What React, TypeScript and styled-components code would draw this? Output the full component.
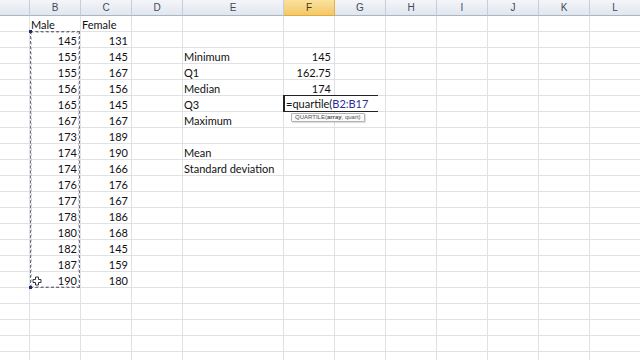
import React from "react";
import styled, { createGlobalStyle } from "styled-components";

const GlobalStyle = createGlobalStyle`
  html, body {
    margin: 0;
    padding: 0;
    background: #ffffff;
    overflow: hidden;
  }
  body {
    font-family: "Lato", "Liberation Sans", Arial, sans-serif;
  }
`;

const COLS = [
  { name: "A", width: 30 },
  { name: "B", width: 51 },
  { name: "C", width: 51 },
  { name: "D", width: 51 },
  { name: "E", width: 101 },
  { name: "F", width: 51 },
  { name: "G", width: 51 },
  { name: "H", width: 51 },
  { name: "I", width: 51 },
  { name: "J", width: 51 },
  { name: "K", width: 51 },
  { name: "L", width: 51 },
];

const ROW_COUNT = 22;

const male = [145, 155, 155, 156, 165, 167, 173, 174, 174, 176, 177, 178, 180, 182, 187, 190];
const female = [131, 145, 167, 156, 145, 167, 189, 190, 166, 176, 167, 186, 168, 145, 159, 180];

type CellValue = { text: string; align?: "left" | "right" };

const cells: Record<string, CellValue> = {
  B1: { text: "Male" },
  C1: { text: "Female" },
  E3: { text: "Minimum" },
  F3: { text: "145", align: "right" },
  E4: { text: "Q1" },
  F4: { text: "162.75", align: "right" },
  E5: { text: "Median" },
  F5: { text: "174", align: "right" },
  E6: { text: "Q3" },
  E7: { text: "Maximum" },
  E9: { text: "Mean" },
  E10: { text: "Standard deviation" },
};
male.forEach((v, i) => (cells["B" + (i + 2)] = { text: String(v), align: "right" }));
female.forEach((v, i) => (cells["C" + (i + 2)] = { text: String(v), align: "right" }));

const Sheet = styled.div`
  position: relative;
  width: 640px;
  height: 360px;
  overflow: hidden;
  background: #fff;
`;

const Grid = styled.div`
  display: grid;
  grid-template-columns: ${COLS.map((c) => c.width + "px").join(" ")};
  grid-template-rows: 16px repeat(${ROW_COUNT}, 16px);
`;

const HeaderCell = styled.div<{ $active?: boolean }>`
  box-sizing: border-box;
  display: flex;
  align-items: center;
  justify-content: center;
  font-family: "Liberation Sans", Arial, sans-serif;
  font-size: 10px;
  color: ${(p) => (p.$active ? "#4a3a10" : "#3e4a5c")};
  background: ${(p) =>
    p.$active
      ? "linear-gradient(#fbe29e, #f2c867)"
      : "linear-gradient(#f3f5f8, #e1e6ee)"};
  border-right: 1px solid ${(p) => (p.$active ? "#e2b04a" : "#c5cdd8")};
  border-bottom: 1px solid ${(p) => (p.$active ? "#e2a93a" : "#a9b6c6")};
`;

const Cell = styled.div<{ $align?: "left" | "right" }>`
  box-sizing: border-box;
  position: relative;
  border-right: 1px solid #dfe1e3;
  border-bottom: 1px solid #dfe1e3;
  font-size: 11px;
  color: #111;
  line-height: 17px;
  padding: 0 3px 0 1px;
  white-space: nowrap;
  overflow: visible;
  text-align: ${(p) => (p.$align === "right" ? "right" : "left")};
`;

/* dashed copy marquee around B2:B17 */
const Marquee = styled.div`
  position: absolute;
  left: 30px;
  top: 31px;
  width: 50px;
  height: 257px;
  box-sizing: border-box;
  border: 1px dashed #6b6b7a;
  outline: 1px dashed #c8c8d0;
  outline-offset: -2px;
  pointer-events: none;
`;

const Handle = styled.div<{ $bottom?: boolean }>`
  position: absolute;
  left: -2px;
  ${(p) => (p.$bottom ? "bottom: -2px;" : "top: -2px;")}
  width: 3px;
  height: 3px;
  background: #1f2d6b;
`;

/* in-cell editor opened on F6 */
const Editor = styled.div`
  position: absolute;
  left: -1px;
  top: -1px;
  z-index: 2;
  width: 95px;
  height: 17px;
  box-sizing: border-box;
  background: #fff;
  border-top: 1.5px solid #222;
  border-bottom: 1.5px solid #222;
  border-left: 2px solid #222;
  font-size: 11px;
  line-height: 15px;
  padding-left: 1px;
  white-space: nowrap;
  color: #111;
  text-align: left;
`;

const RefText = styled.span`
  color: #2b2d9a;
`;

const Tooltip = styled.div`
  position: absolute;
  left: 7px;
  top: 17px;
  z-index: 3;
  height: 9px;
  padding: 0 3px;
  box-sizing: border-box;
  background: #fafafa;
  border: 1px solid #b4b4b4;
  border-radius: 1px;
  font-family: "Liberation Sans", Arial, sans-serif;
  font-size: 6px;
  line-height: 7px;
  color: #555;
  white-space: nowrap;
  box-shadow: 1px 1px 1px rgba(0, 0, 0, 0.15);
`;

const Cursor = styled.svg`
  position: absolute;
  left: 2px;
  top: 4px;
`;

function CellContent({ id, value }: { id: string; value?: CellValue }) {
  if (id === "F6") {
    return (
      <>
        <Editor>
          =quartile(<RefText>B2:B17</RefText>
        </Editor>
        <Tooltip>
          QUARTILE(<b>array</b>, quart)
        </Tooltip>
      </>
    );
  }
  if (id === "B17") {
    return (
      <>
        <Cursor width="10" height="10" viewBox="0 0 10 10">
          <path
            d="M3.5 1h3v2.5H9v3H6.5V9h-3V6.5H1v-3h2.5z"
            fill="#fff"
            stroke="#333"
            strokeWidth="1"
          />
        </Cursor>
        {value?.text}
      </>
    );
  }
  return <>{value?.text}</>;
}

export default function App() {
  const rows = Array.from({ length: ROW_COUNT }, (_, i) => i + 1);
  return (
    <Sheet>
      <GlobalStyle />
      <Grid>
        {COLS.map((c) => (
          <HeaderCell key={c.name} $active={c.name === "F"}>
            {c.name === "A" ? "" : c.name}
          </HeaderCell>
        ))}
        {rows.map((r) =>
          COLS.map((c) => {
            const id = c.name + r;
            const v = cells[id];
            return (
              <Cell key={id} $align={v?.align}>
                <CellContent id={id} value={v} />
              </Cell>
            );
          })
        )}
      </Grid>
      <Marquee>
        <Handle />
        <Handle $bottom />
      </Marquee>
    </Sheet>
  );
}
